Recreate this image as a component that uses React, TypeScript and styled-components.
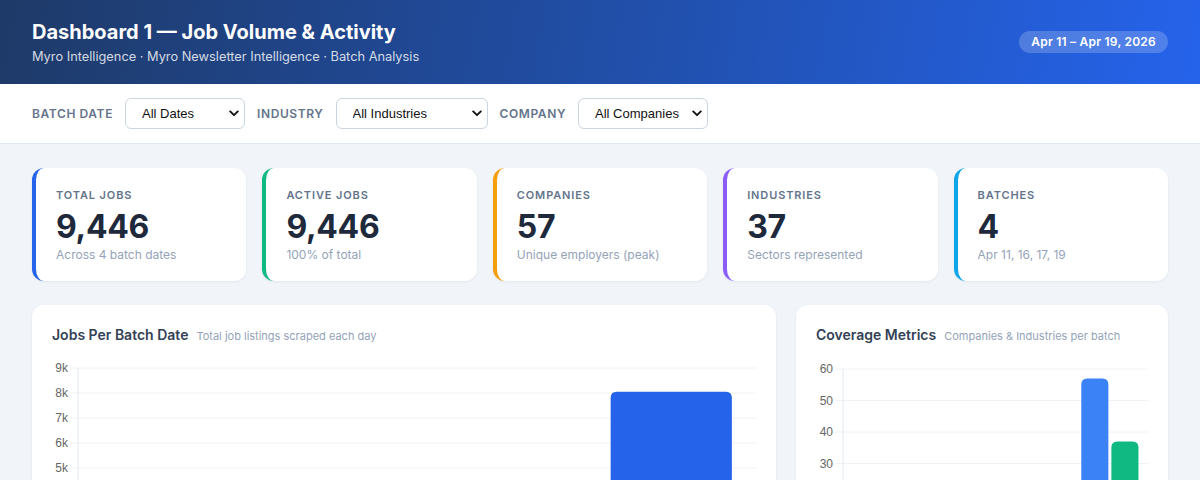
import { styled, createGlobalStyle } from "styled-components"

const GlobalStyle = createGlobalStyle`
    * { box-sizing: border-box; }
    body {
        margin: 0;
        background: #f1f5f9;
        font-family: Inter, "Noto Sans", "Liberation Sans", sans-serif;
        color: #1e293b;
    }
`

type Kpi = { label: string; value: string; sub: string; color: string }

const kpis: Kpi[] = [
    { label: "Total Jobs", value: "9,446", sub: "Across 4 batch dates", color: "#2563eb" },
    { label: "Active Jobs", value: "9,446", sub: "100% of total", color: "#10b981" },
    { label: "Companies", value: "57", sub: "Unique employers (peak)", color: "#f59e0b" },
    { label: "Industries", value: "37", sub: "Sectors represented", color: "#8b5cf6" },
    { label: "Batches", value: "4", sub: "Apr 11, 16, 17, 19", color: "#0ea5e9" },
]

const batches = ["Apr 11", "Apr 16", "Apr 17", "Apr 19"]
const jobsPerBatch = [412, 368, 616, 8050]
const companiesPerBatch = [21, 18, 22, 57]
const industriesPerBatch = [15, 12, 17, 37]

type Series = { values: number[]; color: string }

type BarChartProps = {
    width: number
    height: number
    axisX: number
    top: number
    step: number
    ticks: number[]
    max: number
    series: Series[]
    fmt: (v: number) => string
    barFrac: number
    barGap: number
}

const BarChart = ({ width, height, axisX, top, step, ticks, max, series, fmt, barFrac, barGap }: BarChartProps) => {
    const plotH = step * (ticks.length - 1)
    const base = top + plotH
    const catW = (width - axisX) / batches.length
    const groupW = catW * barFrac
    const barW = (groupW - barGap * (series.length - 1)) / series.length
    const y = (v: number) => base - (v / max) * plotH

    // bar with rounded top corners
    const bar = (x: number, w: number, v: number) => {
        const t = y(v)
        const r = Math.min(6, w / 2, base - t)
        return `M${x},${base} L${x},${t + r} Q${x},${t} ${x + r},${t} L${x + w - r},${t} Q${x + w},${t} ${x + w},${t + r} L${x + w},${base} Z`
    }

    return (
        <svg width={width} height={height}>
            {ticks.map((t) => (
                <g key={t}>
                    <line x1={axisX - 8} x2={width} y1={y(t)} y2={y(t)} stroke="#eef2f6" />
                    <text x={axisX - 10} y={y(t) + 4} textAnchor="end" fontSize="12" fill="#666" fontFamily="Liberation Sans, Arial, sans-serif">
                        {fmt(t)}
                    </text>
                </g>
            ))}
            <line x1={axisX} x2={axisX} y1={top} y2={base} stroke="#e2e8f0" />
            {batches.map((b, i) => {
                const gx = axisX + catW * i + (catW - groupW) / 2
                return (
                    <g key={b}>
                        {series.map((s, j) => (
                            <path key={j} d={bar(gx + j * (barW + barGap), barW, s.values[i])} fill={s.color} />
                        ))}
                        <text x={axisX + catW * (i + 0.5)} y={base + 18} textAnchor="middle" fontSize="12" fill="#666" fontFamily="Liberation Sans, Arial, sans-serif">
                            {b}
                        </text>
                    </g>
                )
            })}
        </svg>
    )
}

const Chevron = () => (
    <ChevronIcon width="10" height="7" viewBox="0 0 10 7">
        <path d="M1.2 1.4 L5 5.2 L8.8 1.4" fill="none" stroke="#111" strokeWidth="1.9" strokeLinecap="round" strokeLinejoin="round" />
    </ChevronIcon>
)

const App = () => {
    return (
        <>
            <GlobalStyle />
            <Header>
                <div>
                    <Title>Dashboard 1 — Job Volume &amp; Activity</Title>
                    <Subtitle>Myro Intelligence · Myro Newsletter Intelligence · Batch Analysis</Subtitle>
                </div>
                <DatePill>Apr 11 – Apr 19, 2026</DatePill>
            </Header>

            <FilterBar>
                <FilterLabel>Batch Date</FilterLabel>
                <SelectWrap $w={120}>
                    <Select defaultValue="all">
                        <option value="all">All Dates</option>
                    </Select>
                    <Chevron />
                </SelectWrap>
                <FilterLabel>Industry</FilterLabel>
                <SelectWrap $w={152}>
                    <Select defaultValue="all">
                        <option value="all">All Industries</option>
                    </Select>
                    <Chevron />
                </SelectWrap>
                <FilterLabel>Company</FilterLabel>
                <SelectWrap $w={130}>
                    <Select defaultValue="all">
                        <option value="all">All Companies</option>
                    </Select>
                    <Chevron />
                </SelectWrap>
            </FilterBar>

            <Main>
                <KpiRow>
                    {kpis.map((k) => (
                        <KpiCard key={k.label} $accent={k.color}>
                            <KpiLabel>{k.label}</KpiLabel>
                            <KpiValue>{k.value}</KpiValue>
                            <KpiSub>{k.sub}</KpiSub>
                        </KpiCard>
                    ))}
                </KpiRow>

                <ChartRow>
                    <ChartCard>
                        <ChartHead>
                            <ChartTitle>Jobs Per Batch Date</ChartTitle>
                            <ChartSub>Total job listings scraped each day</ChartSub>
                        </ChartHead>
                        <BarChart
                            width={704}
                            height={270}
                            axisX={26}
                            top={7}
                            step={25}
                            ticks={[0, 1000, 2000, 3000, 4000, 5000, 6000, 7000, 8000, 9000]}
                            max={9000}
                            series={[{ values: jobsPerBatch, color: "#2563eb" }]}
                            fmt={(v) => (v === 0 ? "0" : `${v / 1000}k`)}
                            barFrac={0.715}
                            barGap={0}
                        />
                    </ChartCard>
                    <ChartCard>
                        <ChartHead>
                            <ChartTitle>Coverage Metrics</ChartTitle>
                            <ChartSub>Companies &amp; Industries per batch</ChartSub>
                        </ChartHead>
                        <BarChart
                            width={332}
                            height={240}
                            axisX={27}
                            top={8}
                            step={31.5}
                            ticks={[0, 10, 20, 30, 40, 50, 60]}
                            max={60}
                            series={[
                                { values: companiesPerBatch, color: "#3b82f6" },
                                { values: industriesPerBatch, color: "#10b981" },
                            ]}
                            fmt={(v) => `${v}`}
                            barFrac={0.75}
                            barGap={3}
                        />
                    </ChartCard>
                </ChartRow>
            </Main>
        </>
    )
}

const Header = styled.header`
    height: 84px;
    padding: 0 32px;
    display: flex;
    align-items: center;
    justify-content: space-between;
    background: linear-gradient(100deg, #1e3a68 0%, #2150ad 55%, #2563eb 100%);
    color: #fff;
`

const Title = styled.h1`
    margin: 0;
    font-size: 20px;
    line-height: 26px;
    font-weight: 700;
`

const Subtitle = styled.p`
    margin: 3px 0 0;
    font-size: 12.8px;
    line-height: 18px;
    color: rgba(255, 255, 255, 0.82);
`

const DatePill = styled.div`
    padding: 4px 12px;
    border-radius: 999px;
    background: rgba(255, 255, 255, 0.2);
    font-size: 12px;
    line-height: 14px;
    font-weight: 600;
    letter-spacing: 0.02em;
`

const FilterBar = styled.div`
    height: 60px;
    padding: 0 32px;
    display: flex;
    align-items: center;
    gap: 12px;
    background: #fff;
    border-bottom: 1px solid #e2e8f0;
`

const FilterLabel = styled.span`
    font-size: 12px;
    font-weight: 600;
    letter-spacing: 0.05em;
    text-transform: uppercase;
    color: #64748b;
`

const SelectWrap = styled.div<{ $w: number }>`
    position: relative;
    width: ${(p) => p.$w}px;
    height: 31px;
`

const Select = styled.select`
    appearance: none;
    width: 100%;
    height: 100%;
    padding: 0 18px 0 16px;
    border: 1px solid #cbd5e1;
    border-radius: 6px;
    background: #fff;
    font-family: "Liberation Sans", Arial, sans-serif;
    font-size: 13px;
    color: #111;
    outline: none;
`

const ChevronIcon = styled.svg`
    position: absolute;
    right: 6px;
    top: 12px;
    pointer-events: none;
`

const Main = styled.main`
    padding: 24px 32px;
    display: flex;
    flex-direction: column;
    gap: 24px;
`

const KpiRow = styled.div`
    display: grid;
    grid-template-columns: repeat(5, 1fr);
    gap: 16px;
`

const KpiCard = styled.div<{ $accent: string }>`
    background: #fff;
    border-radius: 12px;
    border-left: 4px solid ${(p) => p.$accent};
    padding: 20px 20px 17px;
    box-shadow: 0 1px 3px rgba(15, 23, 42, 0.06);
`

const KpiLabel = styled.div`
    font-size: 11px;
    line-height: 14px;
    font-weight: 600;
    letter-spacing: 0.08em;
    text-transform: uppercase;
    color: #64748b;
`

const KpiValue = styled.div`
    margin-top: 7px;
    font-size: 32px;
    line-height: 36px;
    font-weight: 700;
    color: #1e293b;
    letter-spacing: -0.01em;
`

const KpiSub = styled.div`
    margin-top: 1px;
    font-size: 12px;
    line-height: 18px;
    color: #94a3b8;
`

const ChartRow = styled.div`
    display: grid;
    grid-template-columns: 2fr 1fr;
    gap: 20px;
`

const ChartCard = styled.section`
    background: #fff;
    border-radius: 12px;
    padding: 20px;
    box-shadow: 0 1px 3px rgba(15, 23, 42, 0.06);
`

const ChartHead = styled.div`
    display: flex;
    align-items: baseline;
    gap: 8px;
    margin-bottom: 16px;
`

const ChartTitle = styled.h3`
    margin: 0;
    font-size: 14px;
    line-height: 20px;
    font-weight: 600;
    color: #334155;
`

const ChartSub = styled.span`
    font-size: 11px;
    color: #94a3b8;
`

export default App
